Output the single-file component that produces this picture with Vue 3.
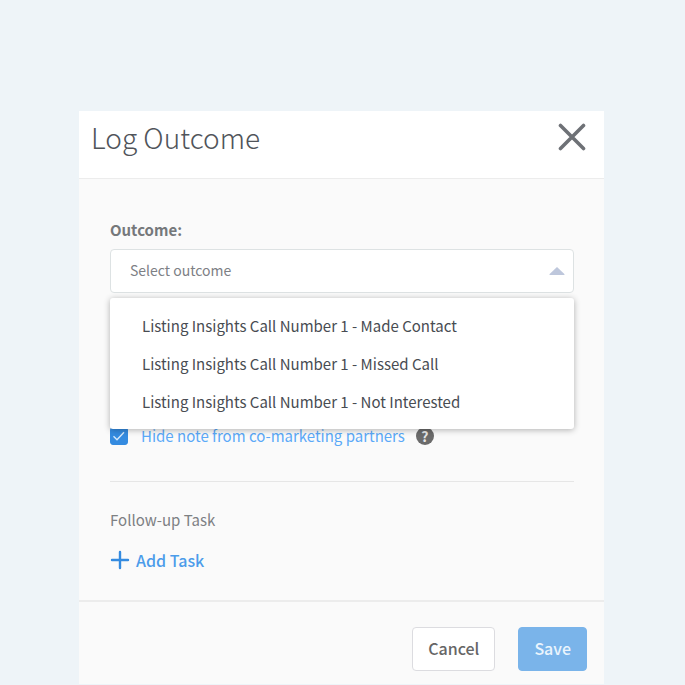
<template>
    <div class="page">
        <form class="modal" @submit.prevent>
            <header class="modal-header">
                <h1>Log Outcome</h1>
                <button type="button" class="close" aria-label="Close">
                    <svg width="28" height="28" viewBox="0 0 28 28">
                        <path d="M2.5 2.5L25.5 25.5M25.5 2.5L2.5 25.5" />
                    </svg>
                </button>
            </header>

            <div class="modal-body">
                <label class="field-label" for="outcome">Outcome:</label>
                <div class="dropdown">
                    <select id="outcome" v-model="outcome" @mousedown.prevent="open = !open">
                        <option value="">Select outcome</option>
                        <option v-for="item in outcomes" :key="item" :value="item">{{ item }}</option>
                    </select>
                    <svg class="arrow" width="16" height="8" viewBox="0 0 16 8">
                        <path d="M8 0L15.6 7.2Q15.6 8 15 8H1Q.4 8 .4 7.2Z" />
                    </svg>
                    <ul v-if="open" class="menu">
                        <li v-for="item in outcomes" :key="item" @click="handleSelect(item)">
                            {{ item }}
                        </li>
                    </ul>
                </div>

                <div class="hide-note">
                    <span class="check">
                        <input id="hideNote" v-model="hideNote" type="checkbox">
                        <svg v-if="hideNote" width="18" height="18" viewBox="0 0 18 18">
                            <path d="M3.5 9.2L7 12.7L14 5.2" />
                        </svg>
                    </span>
                    <label for="hideNote">Hide note from co-marketing partners</label>
                    <span class="help">?</span>
                </div>

                <section class="follow-up">
                    <h2>Follow-up Task</h2>
                    <button type="button" class="add-task">
                        <svg width="20" height="20" viewBox="0 0 20 20">
                            <path d="M10 2V18M2 10H18" />
                        </svg>
                        Add Task
                    </button>
                </section>
            </div>

            <footer class="modal-footer">
                <button type="button" class="btn">Cancel</button>
                <button type="submit" class="btn btn-save">Save</button>
            </footer>
        </form>
    </div>
</template>

<script setup>
import { ref } from 'vue';

    const outcomes = [
        'Listing Insights Call Number 1 - Made Contact',
        'Listing Insights Call Number 1 - Missed Call',
        'Listing Insights Call Number 1 - Not Interested'
    ]
    const outcome = ref('')
    const open = ref(true)
    const hideNote = ref(true)

    const handleSelect = (item) => {
        outcome.value = item
        open.value = false
    }
</script>

<style>
body {
    background: #eef4f8;
}
</style>

<style scoped>
.page {
    box-sizing: border-box;
    padding: 111px 81px 0 79px;
    color: #484c52;
    font-family: "Noto Sans CJK SC", "Noto Sans", sans-serif;
    font-size: 15px;
    line-height: 24px;
}

.modal {
    background: #fafafa;
}

.modal-header {
    display: flex;
    align-items: center;
    justify-content: space-between;
    height: 67px;
    padding: 0 18px 16px 12px;
    box-sizing: border-box;
    background: #fff;
}

h1 {
    margin: 0;
    color: #50545a;
    font-size: 28px;
    font-weight: 300;
    line-height: 40px;
}

button,
select {
    font: inherit;
    cursor: pointer;
}

.close {
    display: flex;
    padding: 0;
    border: 0;
    background: none;
}

.close path {
    stroke: #6e7176;
    stroke-width: 3.6;
    stroke-linecap: round;
}

.modal-body {
    padding: 39px 30px 28px 31px;
    border-top: 1px solid #ececec;
    border-bottom: 2px solid #ececec;
}

.field-label {
    display: block;
    margin-bottom: 7px;
    color: #75787b;
    font-weight: 700;
}

.dropdown {
    position: relative;
}

select {
    display: block;
    width: 100%;
    height: 44px;
    padding: 0 40px 2px 19px;
    border: 1px solid #dde2e3;
    border-radius: 4px;
    background: #fff;
    color: #7d8085;
    font-size: 14px;
    appearance: none;
}

.arrow {
    position: absolute;
    top: 18px;
    right: 9px;
    fill: #bec7dc;
    pointer-events: none;
}

.menu {
    position: absolute;
    top: 49px;
    left: 0;
    right: 0;
    z-index: 1;
    margin: 0;
    padding: 9px 0 8px;
    border-radius: 3px;
    background: #fff;
    box-shadow: 0 1px 6px rgba(0, 0, 0, 0.3);
    list-style: none;
}

.menu li {
    padding: 7px 32px;
    cursor: pointer;
}

.hide-note {
    display: flex;
    align-items: center;
    margin-top: 131px;
    padding-bottom: 33px;
    border-bottom: 1px solid #e6e6e6;
    color: #5aa9f8;
}

.check {
    display: grid;
    margin-right: 13px;
}

.check input,
.check svg {
    grid-area: 1 / 1;
}

.check input {
    width: 18px;
    height: 18px;
    margin: 0;
    border: 1px solid #348be0;
    border-radius: 3px;
    appearance: none;
}

.check input:checked {
    background: #348be0;
}

.check svg {
    fill: none;
    stroke: #d5e9fb;
    stroke-width: 1.4;
    pointer-events: none;
}

.help {
    width: 18px;
    height: 18px;
    margin-left: 11px;
    border-radius: 50%;
    background: #6b6b6b;
    color: #e6e6e6;
    font-size: 14px;
    font-weight: 700;
    line-height: 18px;
    text-align: center;
}

h2 {
    margin: 26px 0 16px;
    color: #7d8083;
    font-size: 15px;
    font-weight: 400;
    line-height: 24px;
}

.add-task {
    display: flex;
    align-items: center;
    gap: 6px;
    padding: 0;
    border: 0;
    background: none;
    color: #4c9cea;
    font-size: 16px;
    font-weight: 500;
}

.add-task path {
    stroke: #348be0;
    stroke-width: 2.4;
    stroke-linecap: round;
}

.modal-footer {
    display: flex;
    justify-content: flex-end;
    gap: 23px;
    padding: 25px 17px 13px;
}

.btn {
    height: 44px;
    padding: 0 15px 2px;
    border: 1px solid #dcdce0;
    border-radius: 4px;
    background: #fff;
    color: #666;
    font-size: 16px;
    font-weight: 500;
}

.btn-save {
    border-color: #7ab4ea;
    background: #7ab4ea;
    color: #eaf4fd;
}
</style>
